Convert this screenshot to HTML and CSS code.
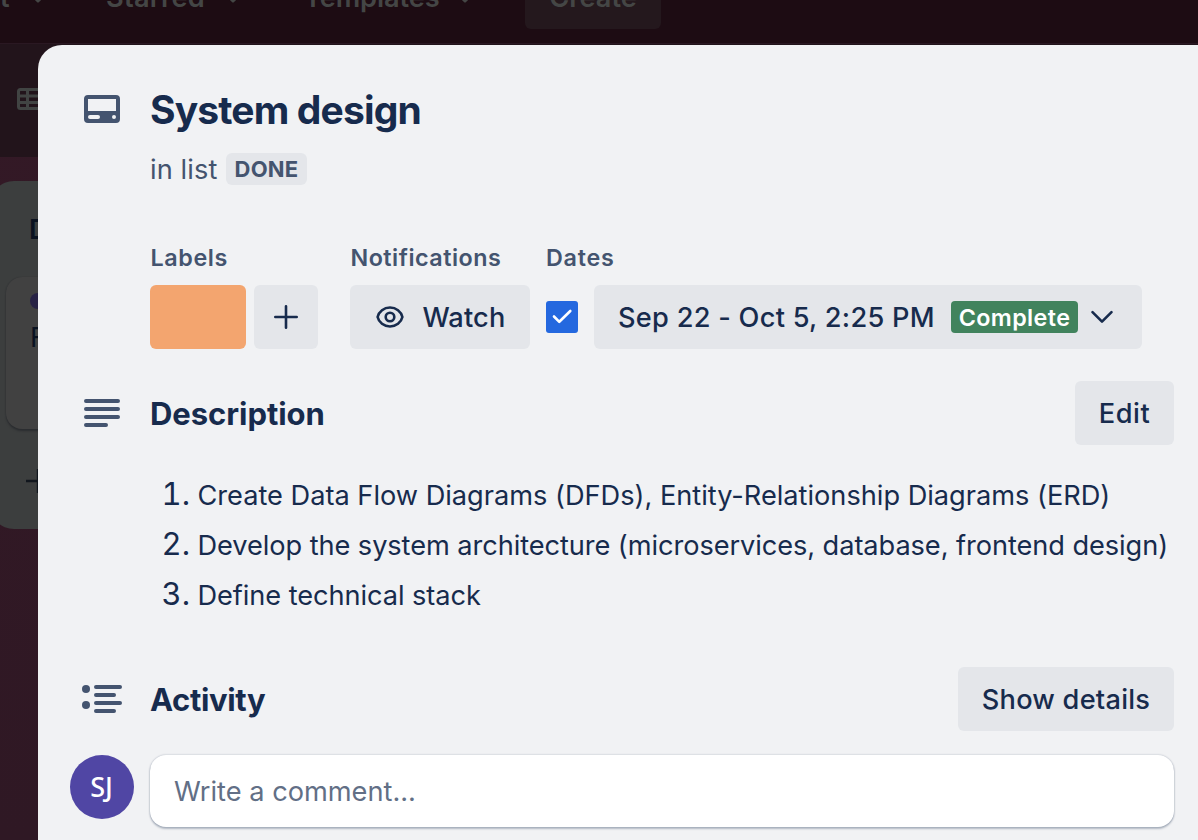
FILE: index.html
```
<!DOCTYPE html>
<html lang="en">
<head>
<meta charset="utf-8">
<title>System design</title>
<link rel="stylesheet" href="styles.css">
</head>
<body>
<div class="app">
  <nav class="nav">
    <span class="nav-item nav-recent">t<svg class="caret" viewBox="0 0 16 10"><path d="M3 2l5 5 5-5"/></svg></span>
    <span class="nav-item nav-starred">Starred<svg class="caret" viewBox="0 0 16 10"><path d="M3 2l5 5 5-5"/></svg></span>
    <span class="nav-item nav-templates">Templates<svg class="caret" viewBox="0 0 16 10"><path d="M3 2l5 5 5-5"/></svg></span>
    <span class="nav-create">Create</span>
  </nav>
  <div class="board-bar">
    <svg class="table-icon" viewBox="0 0 36 24"><rect x="1.5" y="1.5" width="33" height="19" rx="2"/><path d="M1.5 8h33M1.5 14.5h33M10.5 1.5v19"/></svg>
  </div>
  <div class="board">
    <section class="list">
      <h3 class="list-name">D</h3>
      <div class="card"><span class="card-label"></span><span class="card-name">F</span></div>
      <svg class="list-add" viewBox="0 0 24 24"><path d="M0 12h24M12 0v24"/></svg>
    </section>
  </div>
</div>

<main class="modal">
  <header class="row head">
    <svg class="icon icon-card" viewBox="0 0 36 28"><path fill-rule="evenodd" d="M4 0h28a4 4 0 0 1 4 4v20a4 4 0 0 1-4 4H4a4 4 0 0 1-4-4V4a4 4 0 0 1 4-4zM4 4v12h28V4zM6 20a2 2 0 0 0 0 4h8a2 2 0 0 0 0-4zM30 20a2 2 0 1 0 0 4a2 2 0 0 0 0-4z"/></svg>
    <div class="head-text">
      <h1 class="title">System design</h1>
      <p class="in-list"><span class="in-list-text">in list</span><span class="list-badge">DONE</span></p>
    </div>
  </header>

  <div class="meta">
    <section>
      <h2 class="meta-name">Labels</h2>
      <div class="meta-body">
        <span class="label-chip"></span>
        <button class="btn btn-add" aria-label="Add label"><svg class="plus" viewBox="0 0 24 24"><path d="M1.300 12h21.400M12 1.300v21.400"/></svg></button>
      </div>
    </section>
    <section class="meta-notify">
      <h2 class="meta-name name-notify">Notifications</h2>
      <div class="meta-body">
        <button class="btn btn-text btn-watch"><svg class="eye" viewBox="0 0 28 24"><path d="M1.600 12C2.800 6.500 8 2.500 14 2.500S25.200 6.500 26.400 12C25.200 17.500 20 21.500 14 21.500S2.800 17.500 1.600 12z"/><circle cx="14" cy="12" r="4.300"/></svg><span>Watch</span></button>
      </div>
    </section>
    <section class="meta-dates">
      <h2 class="meta-name name-dates">Dates</h2>
      <div class="meta-body dates-body">
        <span class="check" role="checkbox" aria-checked="true"><svg class="tick" viewBox="0 0 32 32"><path d="M8 15.500l5.300 5.300L24.300 10"/></svg></span>
        <button class="btn btn-date"><span class="date-text">Sep 22 - Oct 5, 2:25 PM</span><span class="complete">Complete</span><svg class="chevron" viewBox="0 0 24 16"><path d="M2.500 3.200l9.500 9.500 9.500-9.500"/></svg></button>
      </div>
    </section>
  </div>

  <section class="row section-head">
    <svg class="icon icon-lines" viewBox="0 0 36 28"><path d="M2 2h32M2 10h32M2 18h32M2 26h20"/></svg>
    <div class="section-title">
      <h2 class="heading name-desc">Description</h2>
      <button class="btn btn-text btn-edit">Edit</button>
    </div>
  </section>
  <ol class="steps">
    <li class="step"><span class="num">1.</span><span>Create Data Flow Diagrams (DFDs), Entity-Relationship Diagrams (ERD)</span></li>
    <li class="step step-tight"><span class="num">2.</span><span>Develop the system architecture (microservices, database, frontend design)</span></li>
    <li class="step step-tight"><span class="num">3.</span><span>Define technical stack</span></li>
  </ol>

  <section class="row section-head activity">
    <svg class="icon icon-activity" viewBox="0 0 40 28"><circle cx="4" cy="4" r="4"/><circle cx="4" cy="20" r="4"/><path d="M14 2h24M14 10h18M14 18h24M14 26h18"/></svg>
    <div class="section-title">
      <h2 class="heading name-activity">Activity</h2>
      <button class="btn btn-text btn-details">Show details</button>
    </div>
  </section>
  <div class="row comment">
    <span class="avatar">SJ</span>
    <div class="comment-box">Write a comment...</div>
  </div>
</main>
</body>
</html>
```

FILE: styles.css
```
* { box-sizing: border-box; }
body {
  margin: 0;
  width: 1198px;
  height: 840px;
  overflow: hidden;
  position: relative;
  font: 400 27.2px/32px Inter, "Liberation Sans", sans-serif;
  color: #172b4d;
  white-space: nowrap;
}
h1, h2, h3, p, ol { margin: 0; padding: 0; }
svg { display: block; flex: none; overflow: visible; }

/* Dimmed board behind the dialog */
.app { height: 840px; background: linear-gradient(#341926, #2f1824); }
.nav {
  height: 43px;
  background: #1d0c13;
  color: #444645;
  font-weight: 600;
  display: flex;
  align-items: flex-start;
}
.nav-item { display: flex; height: 32px; margin-top: -18px; align-items: center; }
.caret { width: 16px; height: 10px; fill: none; stroke: #444645; stroke-width: 3; stroke-linecap: round; stroke-linejoin: round; margin-top: 1px; }
.nav-recent { width: 46px; justify-content: space-between; }
.nav-starred { width: 135px; margin-left: 60px; justify-content: space-between; letter-spacing: 0.25px; }
.nav-templates { width: 168px; margin-left: 64px; justify-content: space-between; letter-spacing: -0.1px; }
.nav-templates { width: 169px; margin-left: 63px; }
.nav-create {
  width: 136px;
  height: 64px;
  margin: -35px 0 0 52px;
  border-radius: 6px;
  background: #24181d;
  text-align: center;
  line-height: 66px;
}
.board-bar {
  height: 114px;
  padding: 44px 0 0 17px;
  border-top: 1px solid #2a1822;
  background: #22141b;
}
.table-icon { width: 36px; height: 24px; fill: none; stroke: #414443; stroke-width: 3; }
.board { padding-top: 24px; }
.list {
  width: 544px;
  height: 348px;
  margin-left: -10px;
  padding: 33px 16px;
  border-radius: 24px;
  background: #3c3e3e;
}
.list-name { margin-left: 23px; font-size: 27.2px; font-weight: 600; line-height: 32px; color: #0a1220; }
.card {
  height: 152px;
  margin-top: 31px;
  padding: 16px 24px;
  border-radius: 16px;
  background: #414141;
  box-shadow: 0 2px 2px #2b2d30, 0 0 1px #2b2d30;
}
.card-label { display: block; width: 80px; height: 16px; border-radius: 8px; background: #282345; }
.card-name { display: block; margin-top: 13px; color: #0a1220; }
.list-add { width: 24px; height: 24px; margin: 40px 0 0 20px; fill: none; stroke: #11161d; stroke-width: 2.4; }

/* Card dialog */
.modal {
  position: absolute;
  left: 38px;
  top: 45px;
  width: 1160px;
  height: 795px;
  padding: 37px 24px 0 32px;
  border-radius: 24px 0 0 0;
  background: #f1f2f4;
  overflow: hidden;
}
.row { display: grid; grid-template-columns: 64px 1fr; column-gap: 16px; }
.icon { justify-self: center; align-self: center; fill: #44546f; }
.head { height: 103px; }
.icon-card { width: 36px; height: 28px; align-self: start; margin-top: 13px; }
.title { font-size: 39px; line-height: 56px; font-weight: 650; letter-spacing: -0.85px; }
.in-list { display: flex; gap: 9px; margin-top: 15px; color: #44546f; }
.in-list-text { line-height: 34px; width: 67px; letter-spacing: 0.1px; }
.list-badge {
  width: 81px;
  height: 32px;
  border-radius: 6px;
  background: #e4e6ea;
  text-align: center;
  font-size: 22px;
  font-weight: 700;
  letter-spacing: 0.23px;
}
.meta { display: flex; margin: 60px 0 0 80px; height: 104px; }
.meta-notify { margin-left: 32px; }
.meta-dates { margin-left: 16px; }
.meta-name { height: 24px; margin-bottom: 16px; padding-left: 0.5px; font-size: 23.3px; line-height: 25px; font-weight: 600; letter-spacing: 0.61px; color: #44546f; }
.name-notify { letter-spacing: 0.5px; }
.name-dates { padding: 0; letter-spacing: 0.75px; }
.meta-body { display: flex; align-items: center; gap: 8px; }
.dates-body { gap: 16px; }
.label-chip { width: 96px; height: 64px; border-radius: 6px; background: #f3a56f; }
.btn {
  display: flex;
  align-items: center;
  justify-content: center;
  height: 64px;
  padding: 0;
  border: 0;
  border-radius: 6px;
  background: #e4e6ea;
  color: #172b4d;
  font: 500 27.2px/34px Inter, "Liberation Sans", sans-serif;
}
.btn-text { padding-top: 2px; }
.btn-add { width: 64px; }
.plus { width: 24px; height: 24px; fill: none; stroke: #172b4d; stroke-width: 2.6; stroke-linecap: round; }
.btn-watch { width: 180px; justify-content: flex-start; padding-left: 26px; letter-spacing: 0.15px; }
.eye { width: 28px; height: 24px; margin: -2px 18.4px 0 0; fill: none; stroke: #172b4d; stroke-width: 2.6; }
.check { width: 32px; height: 32px; border-radius: 3px; background: #2468df; }
.tick { width: 32px; height: 32px; fill: none; stroke: #fff; stroke-width: 2.6; stroke-linecap: round; stroke-linejoin: round; }
.btn-date { width: 548px; justify-content: flex-start; padding-left: 24px; }
.date-text { width: 333px; padding-top: 2px; text-align: left; letter-spacing: 0.27px; }
.complete { width: 127px; height: 32px; border-radius: 4px; background: #41835d; color: #fff; font-size: 23.3px; font-weight: 600; line-height: 33px; letter-spacing: 0.4px; text-align: center; }
.chevron { width: 24px; height: 16px; margin-left: 12px; fill: none; stroke: #172b4d; stroke-width: 2.6; stroke-linecap: round; stroke-linejoin: round; }

.section-head { height: 64px; margin-top: 32px; }
.icon-lines { width: 36px; height: 28px; fill: none; stroke: #44546f; stroke-width: 4; stroke-linecap: round; }
.icon-activity { width: 40px; height: 28px; }
.icon-activity path { fill: none; stroke: #44546f; stroke-width: 4; stroke-linecap: round; }
.section-title { display: flex; align-items: center; justify-content: space-between; }
.heading { padding-top: 2px; font-size: 31px; line-height: 40px; font-weight: 650; }
.name-desc { letter-spacing: -0.05px; }
.name-activity { letter-spacing: -0.35px; }
.btn-edit { width: 99px; letter-spacing: 0.5px; }
.btn-details { width: 216px; letter-spacing: 0.24px; }
.steps { margin: 24px 0 0 80px; list-style: none; }
.step { display: grid; grid-template-columns: 40px auto; column-gap: 7.5px; align-items: baseline; height: 50px; line-height: 50px; letter-spacing: -0.01px; }
.step-tight { letter-spacing: -0.07px; }
.num { text-align: right; font-size: 31px; font-feature-settings: "tnum"; letter-spacing: 0; }
.activity { margin-top: 48px; }
.comment { margin-top: 24px; }
.avatar {
  width: 64px;
  height: 64px;
  padding-right: 1px;
  border-radius: 50%;
  background: #5046a4;
  color: #fff;
  text-align: center;
  font: 500 27px/63px "Noto Sans", "Open Sans", sans-serif;
}
.comment-box {
  height: 72px;
  padding: 1px 0 0 24px;
  border-radius: 16px;
  background: #fff;
  box-shadow: 0 2px 2px rgba(9, 30, 66, 0.25), 0 0 2px rgba(9, 30, 66, 0.31);
  line-height: 72px;
  color: #626f86;
}
```
